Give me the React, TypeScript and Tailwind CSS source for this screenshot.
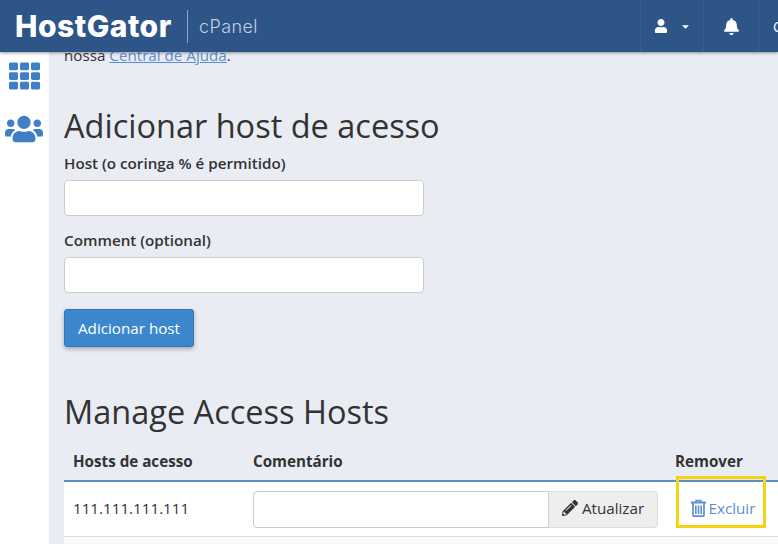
import React from 'react';
import { FaTh, FaUsers, FaUser, FaBell, FaPencilAlt, FaCaretDown } from 'react-icons/fa';

const TrashIcon: React.FC = () => (
  <svg viewBox="0 0 15 18" className="h-[18px] w-[15px]" fill="none" stroke="currentColor">
    <path d="M5 3V1.5h5V3" strokeWidth="1.4" />
    <path d="M0 3.5h15" strokeWidth="2" />
    <path d="M2 4v12.2q0 1 1 1h9q1 0 1-1V4" strokeWidth="1.7" />
    <path d="M4.8 6.5v8.5M7.5 6.5v8.5M10.2 6.5v8.5" strokeWidth="1.6" />
  </svg>
);

const App: React.FC = () => {
  return (
    <div className="flex flex-col w-[778px] h-[544px] overflow-hidden bg-[#e9edf3] font-['Open_Sans',sans-serif] text-[#333]">
      <header className="relative z-10 flex h-[52px] shrink-0 items-stretch justify-between bg-[#2d5588] shadow-[0_1px_3px_rgba(0,0,0,0.4)]">
        <div className="flex items-center pl-[15px]">
          <span className="w-[160px] font-['Inter',sans-serif] text-[30px] font-extrabold leading-none tracking-[0.5px] text-white">HostGator</span>
          <div className="ml-[12px] h-[33px] w-px bg-[#8fa6c4]" />
          <span className="ml-[11px] font-['Inter',sans-serif] text-[18px] font-light tracking-[0.4px] text-[#c3d0e0]">cPanel</span>
        </div>
        <div className="flex items-stretch text-white">
          <div className="flex w-[63px] items-center justify-center gap-[13px] border-l border-[#38608f]">
            <FaUser className="h-[14px] w-[14px]" />
            <FaCaretDown className="h-[11px] w-[9px]" />
          </div>
          <div className="flex w-[55px] items-center justify-center border-l border-[#38608f]">
            <FaBell className="h-[17px] w-[17px]" />
          </div>
          <div className="flex w-[20px] items-center border-l border-[#38608f] pl-[14px] text-[14px]">C</div>
        </div>
      </header>

      <div className="flex min-h-0 flex-1">
        <aside className="flex w-[49px] shrink-0 flex-col items-center bg-white pt-[6px] text-[#3f7fc6]">
          <FaTh className="h-[36px] w-[31px]" />
          <FaUsers className="mt-[16px] ml-[-1px] h-[38px] w-[38px]" />
        </aside>

        <main className="min-w-0 flex-1 overflow-hidden pl-[15px] text-[15.2px]">
          <p className="mt-[-7px] leading-[20px]">
            nossa <a className="text-[#5b8fd0] underline">Central de Ajuda</a>.
          </p>

          <h2 className="mt-[41px] text-[32.5px] font-normal leading-[40px]">Adicionar host de acesso</h2>

          <label className="mt-[7px] block font-semibold leading-[20px]">Host (o coringa % é permitido)</label>
          <input className="mt-[7px] block h-[36px] w-[360px] rounded-[4px] border border-[#ccc] bg-white" />

          <label className="mt-[14px] block font-semibold leading-[20px]">Comment (optional)</label>
          <input className="mt-[7px] block h-[36px] w-[360px] rounded-[4px] border border-[#ccc] bg-white" />

          <button className="mt-[16px] block h-[38px] w-[130px] rounded-[3px] border border-[#2f78bd] bg-[#3a87ce] text-white shadow-[0_2px_4px_rgba(0,0,0,0.3)]">
            Adicionar host
          </button>

          <h2 className="mt-[45px] text-[32.5px] font-normal leading-[40px]">Manage Access Hosts</h2>

          <div className="mt-[12px] flex h-[38px] w-[760px] items-center border-b-2 border-[#5b8fc7] pb-[2px] font-bold">
            <div className="w-[189px] pl-[9px]">Hosts de acesso</div>
            <div className="w-[422px]">Comentário</div>
            <div>Remover</div>
          </div>
          <div className="flex h-[55px] w-[760px] items-center border-b border-[#ddd] bg-white">
            <div className="w-[189px] pb-[2px] pl-[9px]">111.111.111.111</div>
            <div className="flex h-[37px] w-[405px]">
              <input className="h-full w-[296px] rounded-l-[4px] border border-[#ccc] bg-white" />
              <button className="flex h-full w-[109px] items-center justify-center gap-[4px] rounded-r-[4px] border border-l-0 border-[#ddd] bg-[#eee] pb-[2px]">
                <FaPencilAlt className="h-[16px] w-[16px]" />
                Atualizar
              </button>
            </div>
            <div className="relative ml-[19px] flex h-[52px] w-[90px] items-center justify-center gap-[3px] pb-[2px] pl-[2px] text-[#5b8fd0]">
              <TrashIcon />
              Excluir
              {/* annotation box drawn over the header line */}
              <div className="absolute left-[-1px] top-[-7px] h-[52px] w-[90px] border-[3px] border-[#f5d311]" />
            </div>
          </div>
          <div className="h-[10px] w-[760px] bg-[#f9f9f9]" />
        </main>
      </div>
    </div>
  );
};

export default App;
